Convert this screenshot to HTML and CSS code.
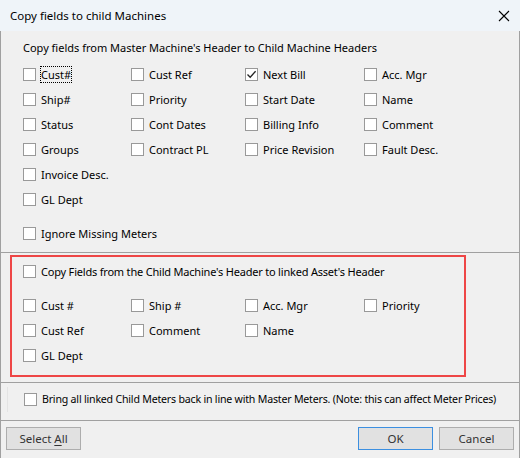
FILE: index.html
```html
<!DOCTYPE html>
<html>
<head>
<meta charset="utf-8">
<link rel="stylesheet" href="styles.css">
</head>
<body>
<div class="dialog">
  <div class="titlebar">
    <span class="title">Copy fields to child Machines</span>
    <svg class="close" width="12" height="12" viewBox="0 0 12 12"><path d="M1 1 L11 11 M11 1 L1 11" stroke="#000" stroke-width="1.1" fill="none"/></svg>
  </div>

  <div class="section master">
    <div class="heading">Copy fields from Master Machine's Header to Child Machine Headers</div>
    <div class="grid">
      <label class="cb"><span class="box"></span><span class="txt focus">Cust#</span></label>
      <label class="cb"><span class="box"></span><span class="txt">Cust Ref</span></label>
      <label class="cb"><span class="box checked"><svg width="11" height="11" viewBox="0 0 11 11"><path d="M1.5 5.5 L4.2 8.3 L9.6 2.2" stroke="#222" stroke-width="1.3" fill="none"/></svg></span><span class="txt">Next Bill</span></label>
      <label class="cb"><span class="box"></span><span class="txt">Acc. Mgr</span></label>

      <label class="cb"><span class="box"></span><span class="txt">Ship#</span></label>
      <label class="cb"><span class="box"></span><span class="txt">Priority</span></label>
      <label class="cb"><span class="box"></span><span class="txt">Start Date</span></label>
      <label class="cb"><span class="box"></span><span class="txt">Name</span></label>

      <label class="cb"><span class="box"></span><span class="txt">Status</span></label>
      <label class="cb"><span class="box"></span><span class="txt">Cont Dates</span></label>
      <label class="cb"><span class="box"></span><span class="txt">Billing Info</span></label>
      <label class="cb"><span class="box"></span><span class="txt">Comment</span></label>

      <label class="cb"><span class="box"></span><span class="txt">Groups</span></label>
      <label class="cb"><span class="box"></span><span class="txt">Contract PL</span></label>
      <label class="cb"><span class="box"></span><span class="txt">Price Revision</span></label>
      <label class="cb"><span class="box"></span><span class="txt">Fault Desc.</span></label>

      <label class="cb"><span class="box"></span><span class="txt">Invoice Desc.</span></label>
      <span></span><span></span><span></span>

      <label class="cb"><span class="box"></span><span class="txt">GL Dept</span></label>
    </div>
    <label class="cb ignore"><span class="box"></span><span class="txt">Ignore Missing Meters</span></label>
  </div>

  <div class="section child">
    <div class="redbox">
      <label class="cb"><span class="box"></span><span class="txt tight">Copy Fields from the Child Machine's Header to linked Asset's Header</span></label>
      <div class="grid child-grid">
        <label class="cb"><span class="box"></span><span class="txt">Cust #</span></label>
        <label class="cb"><span class="box"></span><span class="txt">Ship #</span></label>
        <label class="cb"><span class="box"></span><span class="txt">Acc. Mgr</span></label>
        <label class="cb"><span class="box"></span><span class="txt">Priority</span></label>

        <label class="cb"><span class="box"></span><span class="txt">Cust Ref</span></label>
        <label class="cb"><span class="box"></span><span class="txt">Comment</span></label>
        <label class="cb"><span class="box"></span><span class="txt">Name</span></label>
        <span></span>

        <label class="cb"><span class="box"></span><span class="txt">GL Dept</span></label>
      </div>
    </div>
  </div>

  <div class="section bring">
    <div class="bring-inner">
      <label class="cb"><span class="box"></span><span class="txt tighter">Bring all linked Child Meters back in line with Master Meters. (Note: this can affect Meter Prices)</span></label>
    </div>
  </div>

  <div class="footer">
    <button class="btn">Select <u>A</u>ll</button>
    <span class="spacer"></span>
    <button class="btn default">OK</button>
    <button class="btn">Cancel</button>
  </div>
</div>
</body>
</html>
```

FILE: styles.css
```css
* { box-sizing: border-box; }
html, body { margin: 0; padding: 0; background: #f0f0f0; }
body {
  font-family: "Segoe UI", "Noto Sans", "Open Sans", sans-serif;
  font-size: 11px;
  color: #000;
}
.dialog {
  width: 520px;
  height: 458px;
  display: flex;
  flex-direction: column;
  border-left: 1px solid #a0a0a0;
  border-right: 1px solid #a0a0a0;
  background: #f0f0f0;
}
.titlebar {
  height: 31px;
  background: #eff4f9;
  display: flex;
  align-items: center;
  justify-content: space-between;
  padding: 0 7px 0 10px;
  margin: 0 -1px;
}
.title { font-size: 11.5px; line-height: 16px; }
.close { display: block; margin-right: 3px; }

.section { display: flex; flex-direction: column; }
.master { padding: 9px 0 6px 22px; }
.heading { line-height: 16px; height: 16px; margin-bottom: 6px; }
.grid {
  display: grid;
  grid-template-columns: 108px 114px 119px 1fr;
  grid-auto-rows: 25px;
}
.cb {
  display: flex;
  align-items: center;
  gap: 5px;
  line-height: 15px;
  white-space: nowrap;
}
.box {
  width: 13px;
  height: 13px;
  flex: 0 0 13px;
  background: #fff;
  border: 1px solid #999;
  display: flex;
  align-items: center;
  justify-content: center;
}
.box svg { display: block; }
.focus { outline: 1px dotted #000; outline-offset: 0; }
.tight { letter-spacing: -0.2px; }
.tighter { font-size: 10.6px; letter-spacing: -0.2px; }
.ignore { height: 25px; margin-top: 9px; }

.child {
  border-top: 1px solid #a0a0a0;
  padding: 2px 0 5px 9px;
}
.redbox {
  width: 456px;
  border: 2px solid #ee4646;
  padding: 2px 0 7px 11px;
}
.redbox > .cb { height: 25px; }
.child-grid { margin-top: 9px; }

.bring {
  border-top: 1px solid #a0a0a0;
  height: 38px;
  padding: 4px 0 0 6px;
}
.bring-inner {
  border-left: 1px solid #e4e4e4;
  padding-left: 16px;
  height: 25px;
  display: flex;
  align-items: center;
}

.footer {
  border-top: 1px solid #a0a0a0;
  flex: 1;
  display: flex;
  align-items: flex-start;
  padding: 6px 5px 0 5px;
  gap: 6px;
}
.spacer { flex: 1; }
.btn {
  width: 75px;
  height: 23px;
  background: #e1e1e1;
  border: 1px solid #adadad;
  font-family: inherit;
  font-size: 11.5px;
  color: #333;
  padding: 0;
  line-height: 16px;
}
.btn u { text-underline-offset: 2px; }
.btn.default { border-color: #3c8fe0; }
```
